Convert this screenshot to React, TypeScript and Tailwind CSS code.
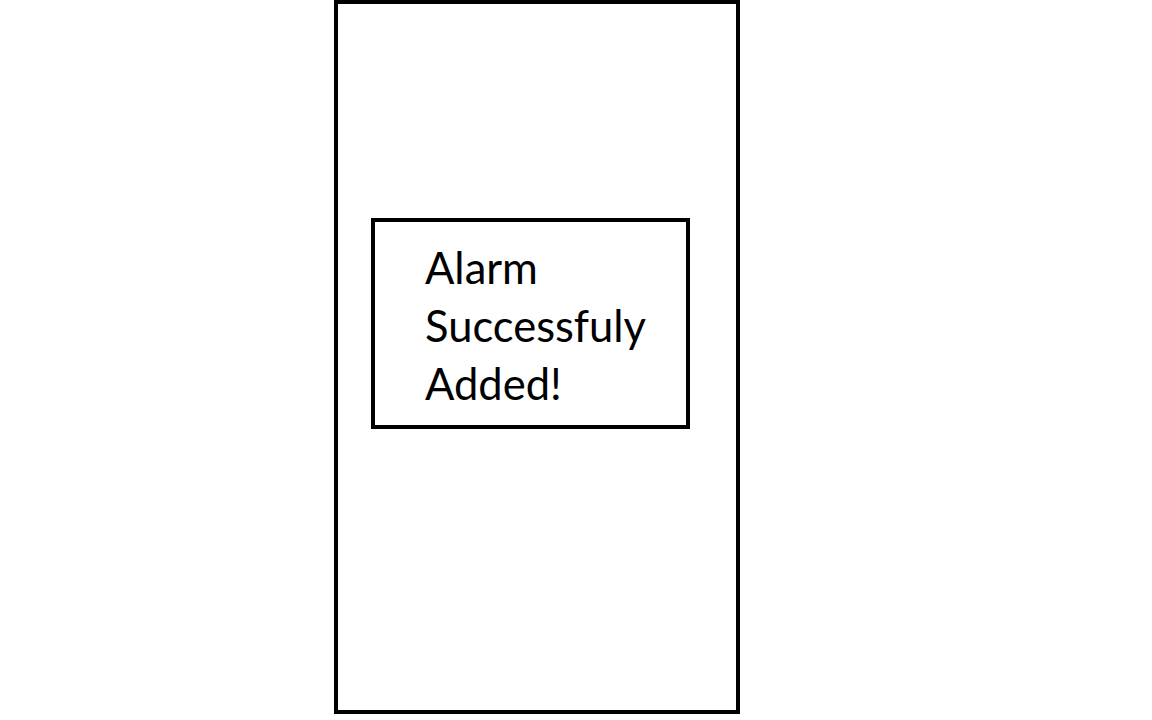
export default function App() {
  return (
    <div className="h-[720px] w-[1152px] bg-white">
      <div className="ml-[334px] flex h-[714px] w-[406px] flex-col border-4 border-black pl-[33px] pt-[214px]">
        <div className="flex h-[211px] w-[319px] flex-col border-4 border-black pl-[50px] pt-[16px]">
          <p className="font-['Lato',sans-serif] text-[43.5px] leading-[58px] text-black">
            Alarm
            <br />
            Successfuly
            <br />
            Added!
          </p>
        </div>
      </div>
    </div>
  );
}
